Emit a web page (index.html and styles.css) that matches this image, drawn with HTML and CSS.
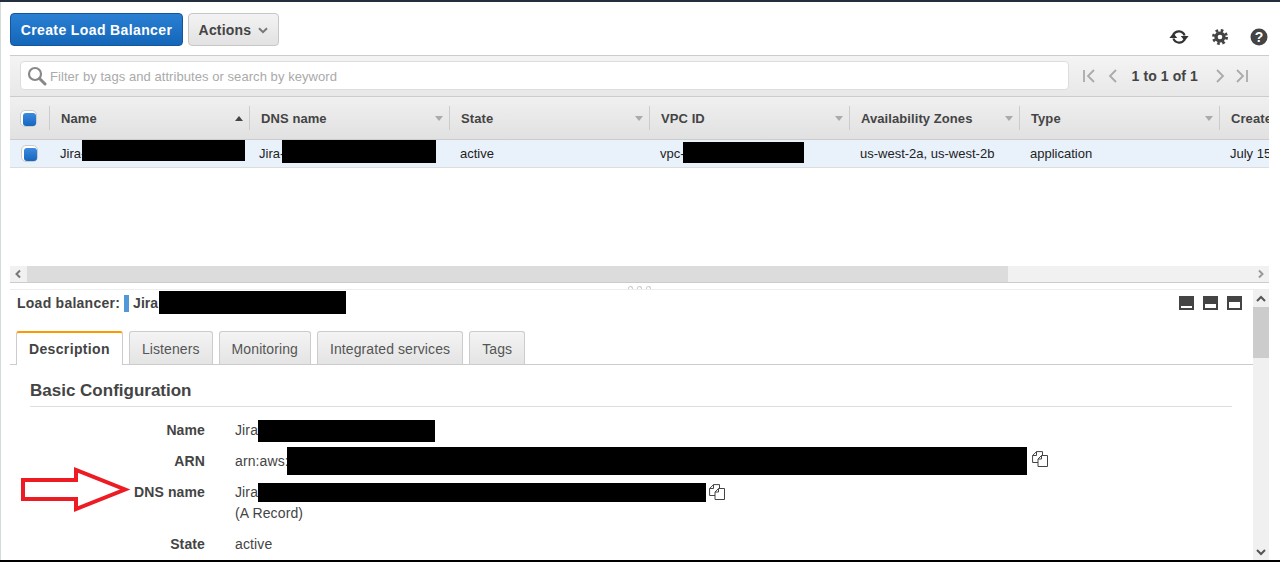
FILE: index.html
```html
<!DOCTYPE html>
<html lang="en">
<head>
<meta charset="utf-8">
<title>Load Balancers</title>
<link rel="stylesheet" href="styles.css">
</head>
<body>
<div class="app">
  <div class="topbar"></div>
  <main class="main">
    <div class="toolbar">
      <button class="btn btn-primary">Create Load Balancer</button>
      <button class="btn btn-default">Actions
        <svg class="chev" width="10" height="7" viewBox="0 0 10 7"><path d="M1 1.2 5 5.2 9 1.2" fill="none" stroke="#777" stroke-width="2"/></svg>
      </button>
      <div class="tool-icons">
        <svg width="22" height="20" viewBox="0 0 20 20"><path d="M4.4 7.5A6.2 6.2 0 0 1 15.6 8.5" fill="none" stroke="#333" stroke-width="2.2"/><path d="M11.8 9H19.6L15.7 14Z" fill="#333"/><path d="M15.6 12.5A6.2 6.2 0 0 1 4.4 11.5" fill="none" stroke="#333" stroke-width="2.2"/><path d="M0.4 11H8.2L4.3 6Z" fill="#333"/></svg>
        <svg width="16" height="16" viewBox="0 0 16 16"><circle cx="8" cy="8" r="5.6" fill="#444"/><circle cx="8" cy="8" r="6.5" fill="none" stroke="#444" stroke-width="3" stroke-dasharray="2.55 2.55"/><circle cx="8" cy="8" r="2.3" fill="#fff"/></svg>
        <svg width="18" height="18" viewBox="0 0 18 18"><circle cx="9" cy="9" r="8.5" fill="#444"/><text x="9" y="14" class="help-q" text-anchor="middle">?</text></svg>
      </div>
    </div>

    <div class="filterbar">
      <div class="search">
        <svg width="20" height="20" viewBox="0 0 20 20"><circle cx="8" cy="8" r="6" fill="none" stroke="#888" stroke-width="2.2"/><path d="M12.5 12.5 18 18" stroke="#888" stroke-width="3" stroke-linecap="round"/></svg>
        <span class="placeholder">Filter by tags and attributes or search by keyword</span>
      </div>
      <div class="pager">
        <svg width="12" height="14" viewBox="0 0 12 14"><path d="M1 1V13M11 1 5 7 11 13" fill="none" stroke="#aaa" stroke-width="1.8"/></svg>
        <svg class="pg-prev" width="10" height="14" viewBox="0 0 10 14"><path d="M9 1 3 7 9 13" fill="none" stroke="#aaa" stroke-width="1.8"/></svg>
        <span class="pg-text">1 to 1 of 1</span>
        <svg class="pg-next" width="10" height="14" viewBox="0 0 10 14"><path d="M1 1 7 7 1 13" fill="none" stroke="#aaa" stroke-width="1.8"/></svg>
        <svg width="12" height="14" viewBox="0 0 12 14"><path d="M1 1 7 7 1 13M11 1V13" fill="none" stroke="#aaa" stroke-width="1.8"/></svg>
      </div>
    </div>

    <div class="table">
      <div class="thead">
        <div class="c c-check"><span class="check check-head"><i></i></span></div>
        <div class="c c-name th">Name<b class="caret caret-up"></b></div>
        <div class="c c-dns th">DNS name<b class="caret"></b></div>
        <div class="c c-state th">State<b class="caret"></b></div>
        <div class="c c-vpc th">VPC ID<b class="caret"></b></div>
        <div class="c c-az th">Availability Zones<b class="caret"></b></div>
        <div class="c c-type th">Type<b class="caret"></b></div>
        <div class="c c-created th">Created At</div>
      </div>
      <div class="trow">
        <div class="c c-check"><span class="check"><i></i></span></div>
        <div class="c c-name">Jira-<span class="redact r-name"></span></div>
        <div class="c c-dns">Jira-<span class="redact r-dns"></span></div>
        <div class="c c-state">active</div>
        <div class="c c-vpc">vpc-<span class="redact r-vpc"></span></div>
        <div class="c c-az">us-west-2a, us-west-2b</div>
        <div class="c c-type">application</div>
        <div class="c c-created">July 15, 2019</div>
      </div>
    </div>

    <div class="hscroll">
      <svg class="hs-arrow" width="17" height="16" viewBox="0 0 17 16"><path d="M10 4.5 6.5 8 10 11.5" fill="none" stroke="#777" stroke-width="2"/></svg>
      <div class="hs-track"><div class="hs-thumb"></div></div>
      <svg class="hs-arrow" width="16" height="16" viewBox="0 0 16 16"><path d="M6 4.5 9.5 8 6 11.5" fill="none" stroke="#999" stroke-width="2"/></svg>
    </div>

    <div class="splitter"><i></i><i></i><i></i></div>

    <section class="pane">
      <div class="pane-content">
        <div class="pane-title">
          <strong class="pane-label">Load balancer:</strong>
          <span class="swatch"></span>
          <strong class="pane-name">Jira<span class="redact r-title"></span></strong>
          <div class="pane-icons">
            <svg width="15" height="14" viewBox="0 0 15 14"><rect width="15" height="14" fill="#444"/><rect x="2" y="10" width="11" height="2" fill="#fff"/></svg>
            <svg width="15" height="14" viewBox="0 0 15 14"><rect width="15" height="14" fill="#444"/><rect x="2" y="8" width="11" height="4" fill="#fff"/></svg>
            <svg width="15" height="14" viewBox="0 0 15 14"><rect width="15" height="14" fill="#444"/><rect x="2" y="6" width="11" height="6" fill="#fff"/></svg>
          </div>
        </div>

        <div class="tabs">
          <div class="tab tab-active">Description</div>
          <div class="tab">Listeners</div>
          <div class="tab">Monitoring</div>
          <div class="tab">Integrated services</div>
          <div class="tab">Tags</div>
        </div>

        <div class="details">
          <h2 class="section-title">Basic Configuration</h2>
          <dl class="props">
            <dt>Name</dt>
            <dd>Jira<span class="redact r-d-name"></span></dd>
            <dt>ARN</dt>
            <dd>arn:aws:<span class="redact r-d-arn"></span>
              <svg class="copy copy-arn" width="16" height="16" viewBox="0 0 16 16"><path d="M.6 11.5V4.5L4.5.6H10.5V11.5Z" fill="#fff" stroke="#444"/><path d="M.6 4.5H4.5V.6" fill="none" stroke="#444"/><path d="M6 15.5V8L9.5 4.5H15.5V15.5Z" fill="#fff" stroke="#444"/><path d="M6 8H9.5V4.5" fill="none" stroke="#444"/></svg>
            </dd>
            <dt>DNS name</dt>
            <dd class="dd-dns">Jira<span class="redact r-d-dns"></span>
              <svg class="copy copy-dns" width="16" height="16" viewBox="0 0 16 16"><path d="M.6 11.5V4.5L4.5.6H10.5V11.5Z" fill="#fff" stroke="#444"/><path d="M.6 4.5H4.5V.6" fill="none" stroke="#444"/><path d="M6 15.5V8L9.5 4.5H15.5V15.5Z" fill="#fff" stroke="#444"/><path d="M6 8H9.5V4.5" fill="none" stroke="#444"/></svg>
              <div>(A Record)</div>
            </dd>
            <dt>State</dt>
            <dd>active</dd>
          </dl>
        </div>
      </div>
      <div class="vscroll">
        <svg width="16" height="17" viewBox="0 0 16 17"><path d="M4 11 8 7 12 11" fill="none" stroke="#555" stroke-width="2"/></svg>
        <div class="vs-track"><div class="vs-thumb"></div></div>
        <svg width="16" height="17" viewBox="0 0 16 17"><path d="M4 7 8 11 12 7" fill="none" stroke="#555" stroke-width="2"/></svg>
      </div>
    </section>

    <svg class="annotation" width="116" height="50" viewBox="0 0 116 50"><path d="M2 13H55V3L104 22.5 55 42V32H2Z" fill="none" stroke="#ed1c24" stroke-width="4"/></svg>
  </main>
  <div class="bottombar"></div>
</div>
</body>
</html>
```

FILE: styles.css
```css
* { box-sizing: border-box; }
html, body { margin: 0; padding: 0; height: 100%; overflow: hidden; background: #fff; }
body { font-family: "Liberation Sans", Arial, sans-serif; font-size: 14px; color: #444; }
.app { display: flex; flex-direction: column; height: 562px; }
.topbar { height: 2px; flex: none; background: #232f3e; }
.bottombar { height: 2px; flex: none; background: #000; }
.main { position: relative; flex: 1; min-height: 0; display: flex; flex-direction: column; padding: 0 11px 0 9px; border-left: 1px solid #d5dbdb; overflow: hidden; }

/* toolbar */
.toolbar { flex: none; height: 53px; padding-top: 11px; display: flex; align-items: flex-start; gap: 5px; }
.btn { height: 33px; border-radius: 4px; font: bold 14px "Liberation Sans", Arial, sans-serif; padding: 0; }
.btn-primary { width: 173px; color: #fff; border: 1px solid #15559c; background: linear-gradient(#2b80d4, #1366b8); letter-spacing: .38px; }
.btn-default { width: 91px; color: #444; border: 1px solid #c6c6c6; background: linear-gradient(#f3f3f3, #e2e2e2); letter-spacing: .2px; }
.chev { margin-left: 3px; vertical-align: 1px; }
.tool-icons { margin-left: auto; margin-top: 14px; margin-right: 1px; display: flex; align-items: center; gap: 22px; }
.help-q { font: bold 14px "Liberation Sans", Arial, sans-serif; fill: #fff; }

/* filter bar */
.filterbar { flex: none; height: 42px; display: flex; align-items: flex-start; padding: 5px 21px 0 10px; border-top: 1px solid #ccc; border-bottom: 1px solid #ccc; background: linear-gradient(#f4f4f4, #e8e8e8); }
.search { width: 1049px; height: 29px; display: flex; align-items: center; gap: 3px; padding-left: 6px; background: #fff; border: 1px solid #ddd; border-radius: 4px; }
.placeholder { font-size: 13px; color: #aaa; letter-spacing: .06px; padding-top: 1px; }
.pager { margin-left: auto; display: flex; align-items: center; height: 29px; color: #444; }
.pg-prev { margin-left: 12px; }
.pg-text { margin: 0 18px 0 15px; font-weight: bold; font-size: 14px; letter-spacing: .1px; white-space: nowrap; }
.pg-next { margin-right: 10px; }

/* table */
.table { flex: none; height: 169px; overflow: hidden; font-size: 13px; }
.thead, .trow { display: flex; width: 1300px; }
.thead { height: 43px; align-items: center; border-bottom: 1px solid #ccc; background: linear-gradient(#f0f0f0, #e1e1e1); font-size: 13px; }
.trow { height: 28px; align-items: center; background: #e9f1fb; border-bottom: 1px solid #ddd; color: #222; font-size: 13px; }
.c { position: relative; flex: none; padding-left: 11px; white-space: nowrap; }
.th { height: 24px; line-height: 25px; padding-left: 11px; font-weight: bold; color: #444; letter-spacing: .08px; border-left: 1px solid #ccc; }
.c-check { width: 39px; padding-left: 10px; }
.c-name, .c-dns, .c-state, .c-vpc { width: 200px; }
.trow .c-dns { padding-left: 10px; }
.c-az { width: 170px; }
.c-type { width: 200px; }
.c-created { width: 80px; }
.check { display: block; width: 17px; height: 17px; padding: 2px; border: 1px solid #ccc; border-radius: 5px; background: #fff; }
.check i { display: block; width: 13px; height: 13px; border-radius: 3px; background: linear-gradient(#3c8ae0, #1666bd); }
.trow .check { margin-left: 1px; }
.caret { position: absolute; right: 6px; top: 10px; width: 0; height: 0; border-left: 4px solid transparent; border-right: 4px solid transparent; border-top: 5px solid #aaa; }
.caret-up { border-top: 0; border-bottom: 5px solid #444; }

/* redactions laid over the text */
.redact { position: absolute; background: #000; }
.r-name { left: 33px; top: -6px; width: 163px; height: 21px; }
.r-dns { left: 33px; top: -6px; width: 154px; height: 23px; }
.r-vpc { left: 34px; top: -4px; width: 121px; height: 21px; }
.r-title { left: 26px; top: -4px; width: 187px; height: 23px; }
.r-d-name { left: 23px; top: 0; width: 177px; height: 22px; }
.r-d-arn { left: 52px; top: -4px; width: 740px; height: 28px; }
.r-d-dns { left: 23px; top: 1px; width: 448px; height: 19px; }

/* horizontal scroll */
.hscroll { flex: none; height: 17px; display: flex; background: #f1f1f1; border-bottom: 1px solid #ccc; }
.hs-arrow { flex: none; }
.hs-track { flex: 1; }
.hs-thumb { width: 981px; height: 16px; background: #dcdcdc; }
.splitter { flex: none; height: 7px; display: flex; justify-content: center; align-items: flex-end; gap: 4px; border-bottom: 1px solid #eee; }
.splitter i { width: 5px; height: 3px; border: 1px solid #ccc; border-bottom: 0; border-radius: 3px 3px 0 0; }

/* details pane */
.pane { flex: 1; min-height: 0; display: flex; overflow: hidden; }
.pane-content { flex: 1; min-width: 0; overflow: hidden; }
.pane-title { position: relative; height: 41px; display: flex; align-items: flex-start; padding: 5px 0 0 7px; font-size: 14px; line-height: 17px; }
.pane-label { letter-spacing: .25px; }
.swatch { width: 5px; height: 17px; margin-left: 4px; background: #5297d6; }
.pane-name { position: relative; margin-left: 4px; }
.pane-icons { margin-left: auto; margin-right: 11px; margin-top: 1px; display: flex; gap: 9px; }
.tabs { height: 34px; display: flex; align-items: flex-end; gap: 6px; padding-left: 6px; border-bottom: 1px solid #ccc; }
.tab { height: 33px; line-height: 35px; padding: 0 12px; border: 1px solid #ccc; border-bottom: 0; border-radius: 3px 3px 0 0; background: linear-gradient(#f4f4f4, #e4e4e4); color: #555; font-size: 14px; letter-spacing: .1px; }
.tab-active { height: 34px; margin-bottom: -1px; line-height: 33px; border-top: 2px solid #f90; background: #fff; font-weight: bold; color: #444; letter-spacing: .35px; }
.details { padding: 0 21px 0 20px; }
.section-title { margin: 0; height: 42px; padding-top: 16px; font-size: 17px; line-height: 20px; font-weight: bold; color: #444; border-bottom: 1px solid #ddd; }
.props { margin: 0; padding-top: 13px; display: grid; grid-template-columns: 175px 1fr; column-gap: 30px; row-gap: 10px; line-height: 21px; }
.props dt { text-align: right; font-weight: bold; letter-spacing: .12px; }
.props dd { position: relative; margin: 0; letter-spacing: .12px; }
.copy { position: absolute; top: 0; }
.copy-arn { left: 797px; }
.copy-dns { left: 474px; top: 2px; }
.vscroll { flex: none; width: 16px; display: flex; flex-direction: column; background: #f0f0f0; }
.vscroll svg { flex: none; }
.vs-track { flex: 1; }
.vs-thumb { width: 16px; height: 51px; background: #ccc; }

/* red annotation arrow on top of the details */
.annotation { position: absolute; left: 20px; top: 465px; }
```
